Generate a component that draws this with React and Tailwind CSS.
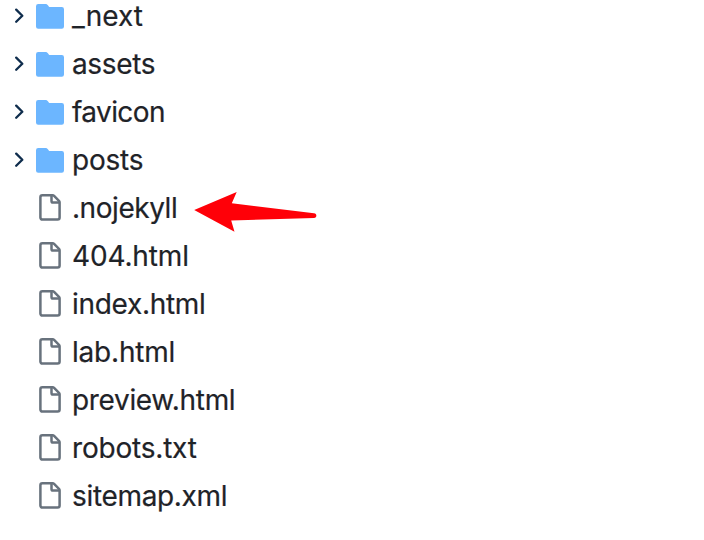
const folders = [
  { name: '_next', tracking: 'tracking-normal' },
  { name: 'assets', tracking: 'tracking-[-0.35px]' },
  { name: 'favicon', tracking: 'tracking-[-0.6px]' },
  { name: 'posts', tracking: 'tracking-[-0.2px]' },
];
const files = [
  { name: '.nojekyll', tracking: 'tracking-[-0.45px]', marked: true },
  { name: '404.html', tracking: 'tracking-[-0.15px]' },
  { name: 'index.html', tracking: 'tracking-[-0.3px]' },
  { name: 'lab.html', tracking: 'tracking-[-0.2px]' },
  { name: 'preview.html', tracking: 'tracking-[-0.33px]' },
  { name: 'robots.txt', tracking: 'tracking-[-0.2px]' },
  { name: 'sitemap.xml', tracking: 'tracking-[-0.33px]' },
];

function Chevron() {
  return (
    <svg viewBox="0 0 10 16" className="h-4 w-2.5 shrink-0" fill="none" stroke="#0f2d4d" strokeWidth="2.3" strokeLinecap="round" strokeLinejoin="round">
      <path d="M2.2 1.6 8.3 7.7 2.2 13.8" />
    </svg>
  );
}

function Folder() {
  return (
    <svg viewBox="0 0 28 25" className="h-[25px] w-7 shrink-0" fill="#6cb6ff">
      <path d="M2.2 0H9.2C10.4 0 11.2.4 11.9 1.3L12.8 2.5C13.1 2.9 13.4 3.1 13.9 3.1H25.8A2.2 2.2 0 0 1 28 5.3V22.6A2.2 2.2 0 0 1 25.8 24.8H2.2A2.2 2.2 0 0 1 0 22.6V2.2A2.2 2.2 0 0 1 2.2 0Z" />
    </svg>
  );
}

function File() {
  return (
    <svg viewBox="0 0 22 27" className="h-[27px] w-[22px] shrink-0" fill="none" stroke="#68727d" strokeWidth="2.5" strokeLinejoin="round">
      <path d="M3.4 1.3H13.6C14.2 1.3 14.7 1.5 15.1 1.9L20 6.8C20.4 7.2 20.6 7.7 20.6 8.3V23.6A2 2 0 0 1 18.6 25.6H3.4A2 2 0 0 1 1.4 23.6V3.3A2 2 0 0 1 3.4 1.3Z" />
      <path d="M12.5 1.5V7A1.6 1.6 0 0 0 14.1 8.6H20.3" />
    </svg>
  );
}

function Arrow() {
  return (
    <svg viewBox="0 0 124 42" className="mt-1.5 h-[42px] w-[124px] shrink-0" fill="#ff0008">
      <path d="M1.2 20 43.7 2.1 38.8 13.3 121 23.3C124 23.6 124.3 27.7 121 28.1L38.2 30.5 41.5 41.7Z" />
    </svg>
  );
}

export default function App() {
  return (
    <main className="h-[540px] w-[704px] overflow-hidden bg-white font-['Inter',sans-serif] text-[28px] leading-[48px] text-[#1f2328] [-webkit-text-stroke:0.2px_#1f2328]">
      <ul className="-mt-2">
        {folders.map(({ name, tracking }) => (
          <li key={name} className="flex h-12 items-center">
            <span className="flex w-9 pl-3.5"><Chevron /></span>
            <span className="flex w-9 pt-px"><Folder /></span>
            <span className={tracking}>{name}</span>
          </li>
        ))}
        {files.map(({ name, tracking, marked }) => (
          <li key={name} className="flex h-12 items-center pl-[39px]">
            <span className="flex w-[33px] pb-px"><File /></span>
            <span className={marked ? `w-[121px] ${tracking}` : tracking}>{name}</span>
            {marked && <Arrow />}
          </li>
        ))}
      </ul>
    </main>
  );
}
